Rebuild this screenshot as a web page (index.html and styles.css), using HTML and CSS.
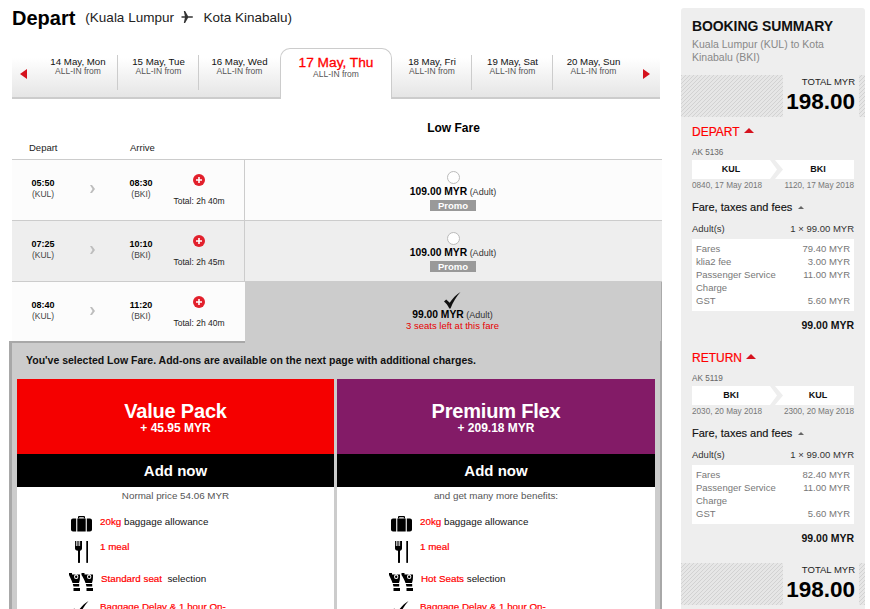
FILE: index.html
```html
<!DOCTYPE html>
<html lang="en">
<head>
<meta charset="utf-8">
<title>Depart</title>
<link rel="stylesheet" href="styles.css">
</head>
<body>
<svg class="defs" width="0" height="0" aria-hidden="true">
  <symbol id="i-bag" viewBox="0 0 21 16"><path d="M7 2.500V1.200C7 .6 7.500 0 8.200 0h4.600c.7 0 1.200.6 1.200 1.200v1.300h-1.200V1.300H8.200v1.200z"/><path d="M6.300 2.500h8.400v13H6.300zM5.200 2.500v13H2C.9 15.500 0 14.600 0 13.500v-9C0 3.400.9 2.500 2 2.500zM15.800 2.500H19c1.100 0 2 .9 2 2v9c0 1.100-.9 2-2 2h-3.200z"/></symbol>
  <symbol id="i-meal" viewBox="0 0 15 22"><path d="M1 0h.9v5h.8V0h.9v5h.8V0h.9v5h.8V0H8v7.500c0 1.200-.9 2-2 2.300V21.500c0 .3-.3.500-.7.500H4.600c-.4 0-.6-.2-.6-.5V9.800C2 9.500 1 8.700 1 7.500z"/><path d="M12.300 0H14v21.500c0 .3-.3.500-.7.500h-.4c-.4 0-.6-.2-.6-.5z"/></symbol>
  <symbol id="i-seat" viewBox="0 0 24 18"><path fill-rule="evenodd" d="M0 0h3v1.500h8V4c0 2-.3 4-1 6H3.500C2.500 7 1 4 0 2zM5 3.800a2.200 2.200 0 1 0 4.400 0 2.200 2.200 0 1 0-4.400 0zM6 3.800a1.200 1.200 0 1 1 2.400 0 1.200 1.200 0 1 1-2.400 0z"/><path d="M3.800 11h6.400v2.500H4.500zM4.500 15H11v3H4.500z"/><path fill-rule="evenodd" d="M12.500 0h3v1.500H24V4c0 2-.3 4-1 6h-6.500c-1-3-2.500-6-4-8zM18 3.800a2.200 2.200 0 1 0 4.400 0 2.200 2.200 0 1 0-4.400 0zM19 3.800a1.200 1.200 0 1 1 2.400 0 1.200 1.200 0 1 1-2.400 0z"/><path d="M16.800 11h6.400v2.500h-5.700zM17.500 15H24v3h-6.500z"/></symbol>
  <symbol id="i-check" viewBox="0 0 17 17"><path d="M0 9.500l2.200-2 3.500 3.300C8.500 6.500 12 2.700 16.500 0 12.500 4.500 9 10 6.500 16.500H5.300C4 13.500 2.200 11.300 0 9.500z"/></symbol>
  <symbol id="i-plus" viewBox="0 0 12 12"><circle cx="6" cy="6" r="6" fill="#e2202c"/><path d="M5.200 3h1.600v2.200H9v1.600H6.800V9H5.200V6.800H3V5.200h2.200z" fill="#fff"/></symbol>
  <symbol id="i-chev" viewBox="0 0 5 8"><path d="M0 0h2L5 4 2 8H0l2.500-4z" fill="#bdbdbd"/></symbol>
</svg>

<div class="page">
  <main class="main">
    <header class="title">
      <h1>Depart</h1>
      <span class="route">(Kuala Lumpur
        <svg class="plane" viewBox="0 0 12 12" width="12" height="12"><path d="M0 5.200h3.900L2.800 0h1.300l3 5.200H11c.6 0 1 .4 1 .8s-.4.800-1 .8H7.100l-3 5.200H2.800l1.100-5.200H0l1-.8z" fill="#333"/></svg>
        <span>Kota Kinabalu)</span></span>
    </header>

    <nav class="dates">
      <div class="date-arrow"><span class="tri tri-left"></span></div>
      <div class="date"><b>14 May, Mon</b><small>ALL-IN from</small></div>
      <div class="date"><b>15 May, Tue</b><small>ALL-IN from</small></div>
      <div class="date date-last"><b>16 May, Wed</b><small>ALL-IN from</small></div>
      <div class="date-active"><b>17 May, Thu</b><small>ALL-IN from</small></div>
      <div class="date"><b>18 May, Fri</b><small>ALL-IN from</small></div>
      <div class="date"><b>19 May, Sat</b><small>ALL-IN from</small></div>
      <div class="date date-last"><b>20 May, Sun</b><small>ALL-IN from</small></div>
      <div class="date-arrow"><span class="tri tri-right"></span></div>
    </nav>

    <div class="table-head">
      <div class="head-left"><span class="h-dep">Depart</span><span class="h-arr">Arrive</span></div>
      <div class="head-fare">Low Fare</div>
    </div>

    <div class="row">
      <div class="flight">
        <div class="time"><b>05:50</b><span>(KUL)</span></div>
        <svg class="chev"><use href="#i-chev"/></svg>
        <div class="time"><b>08:30</b><span>(BKI)</span></div>
        <div class="total"><svg class="plus"><use href="#i-plus"/></svg><span>Total: 2h 40m</span></div>
      </div>
      <div class="fare">
        <span class="radio"></span>
        <div class="price"><b>109.00 MYR</b> <span>(Adult)</span></div>
        <div class="promo">Promo</div>
      </div>
    </div>
    <div class="row row-alt">
      <div class="flight">
        <div class="time"><b>07:25</b><span>(KUL)</span></div>
        <svg class="chev"><use href="#i-chev"/></svg>
        <div class="time"><b>10:10</b><span>(BKI)</span></div>
        <div class="total"><svg class="plus"><use href="#i-plus"/></svg><span>Total: 2h 45m</span></div>
      </div>
      <div class="fare">
        <span class="radio"></span>
        <div class="price"><b>109.00 MYR</b> <span>(Adult)</span></div>
        <div class="promo">Promo</div>
      </div>
    </div>
    <div class="row row-selected">
      <div class="flight">
        <div class="time"><b>08:40</b><span>(KUL)</span></div>
        <svg class="chev"><use href="#i-chev"/></svg>
        <div class="time"><b>11:20</b><span>(BKI)</span></div>
        <div class="total"><svg class="plus"><use href="#i-plus"/></svg><span>Total: 2h 40m</span></div>
      </div>
      <div class="fare">
        <svg class="tick"><use href="#i-check"/></svg>
        <div class="price"><b>99.00 MYR</b> <span>(Adult)</span></div>
        <div class="seats">3 seats left at this fare</div>
      </div>
    </div>

    <section class="addons">
      <p class="addons-note">You've selected Low Fare. Add-ons are available on the next page with additional charges.</p>
      <div class="packs">
        <article class="pack">
          <div class="pack-head pack-red"><h2>Value Pack</h2><b>+ 45.95 MYR</b></div>
          <div class="pack-add">Add now</div>
          <p class="pack-sub">Normal price 54.06 MYR</p>
          <ul class="perks">
            <li class="perk-a"><svg class="ic-bag"><use href="#i-bag"/></svg><span><em>20kg</em> baggage allowance</span></li>
            <li class="perk-b"><svg class="ic-meal"><use href="#i-meal"/></svg><span><em>1 meal</em></span></li>
            <li class="perk-c"><svg class="ic-seat"><use href="#i-seat"/></svg><span><em>Standard seat</em>&nbsp; selection</span></li>
            <li class="perk-d"><svg class="ic-check"><use href="#i-check"/></svg><span><em>Baggage Delay &amp; 1 hour On-</em></span></li>
          </ul>
        </article>
        <article class="pack">
          <div class="pack-head pack-purple"><h2>Premium Flex</h2><b>+ 209.18 MYR</b></div>
          <div class="pack-add">Add now</div>
          <p class="pack-sub">and get many more benefits:</p>
          <ul class="perks">
            <li class="perk-a"><svg class="ic-bag"><use href="#i-bag"/></svg><span><em>20kg</em> baggage allowance</span></li>
            <li class="perk-b"><svg class="ic-meal"><use href="#i-meal"/></svg><span><em>1 meal</em></span></li>
            <li class="perk-c"><svg class="ic-seat"><use href="#i-seat"/></svg><span><em>Hot Seats</em> selection</span></li>
            <li class="perk-d"><svg class="ic-check"><use href="#i-check"/></svg><span><em>Baggage Delay &amp; 1 hour On-</em></span></li>
          </ul>
        </article>
      </div>
    </section>
  </main>

  <aside class="summary">
    <h2 class="sum-title">BOOKING SUMMARY</h2>
    <p class="sum-route">Kuala Lumpur (KUL) to Kota Kinabalu (BKI)</p>
    <div class="sum-total"><div class="sum-total-box"><span>TOTAL MYR</span><b>198.00</b></div></div>

    <h3 class="leg">DEPART <span class="leg-tri"></span></h3>
    <div class="flight-no">AK 5136</div>
    <div class="ports"><b>KUL</b><span class="ports-sep"></span><b>BKI</b></div>
    <div class="port-times"><span>0840, 17 May 2018</span><span>1120, 17 May 2018</span></div>
    <div class="fees-title">Fare, taxes and fees <span class="fees-tri"></span></div>
    <div class="adults"><span>Adult(s)</span><span>1 × 99.00 MYR</span></div>
    <dl class="lines">
      <div><dt>Fares</dt><dd>79.40 MYR</dd></div>
      <div><dt>klia2 fee</dt><dd>3.00 MYR</dd></div>
      <div><dt>Passenger Service Charge</dt><dd>11.00 MYR</dd></div>
      <div><dt>GST</dt><dd>5.60 MYR</dd></div>
    </dl>
    <div class="leg-sum">99.00 MYR</div>

    <h3 class="leg leg-return">RETURN <span class="leg-tri"></span></h3>
    <div class="flight-no">AK 5119</div>
    <div class="ports"><b>BKI</b><span class="ports-sep"></span><b>KUL</b></div>
    <div class="port-times"><span>2030, 20 May 2018</span><span>2300, 20 May 2018</span></div>
    <div class="fees-title">Fare, taxes and fees <span class="fees-tri"></span></div>
    <div class="adults"><span>Adult(s)</span><span>1 × 99.00 MYR</span></div>
    <dl class="lines">
      <div><dt>Fares</dt><dd>82.40 MYR</dd></div>
      <div><dt>Passenger Service Charge</dt><dd>11.00 MYR</dd></div>
      <div><dt>GST</dt><dd>5.60 MYR</dd></div>
    </dl>
    <div class="leg-sum">99.00 MYR</div>

    <div class="sum-total sum-total-end"><div class="sum-total-box"><span>TOTAL MYR</span><b>198.00</b></div></div>
  </aside>
</div>
</body>
</html>
```

FILE: styles.css
```css
* { box-sizing: border-box; }
html, body { margin: 0; height: 609px; overflow: hidden; background: #fff; }
body { font-family: "Liberation Sans", Arial, sans-serif; color: #000; }
.defs { position: absolute; }
.page { display: flex; align-items: flex-start; padding-left: 12px; height: 609px; overflow: hidden; }
.main { width: 650px; flex: none; }

.title { height: 48px; display: flex; align-items: flex-start; padding-top: 6px; }
.title h1 { margin: 0; font-size: 20px; line-height: 24px; font-weight: 700; }
.route { margin-left: 10px; font-size: 13.500px; line-height: 24px; color: #222; }
.plane { margin: 0 7px 0 3px; vertical-align: -1px; }

.dates { display: grid; grid-template-columns: 26px 80px 81px 81px 112px 80px 81px 81px 26px; width: 648px; height: 51px; }
.date, .date-arrow { background: linear-gradient(#fff 0, #fff 20%, #e5e5e5 100%); border-bottom: 2px solid #ccc; }
.date { position: relative; text-align: center; padding-top: 8px; }
.date::after { content: ""; position: absolute; right: 0; top: 7px; height: 35px; width: 1px; background: #ccc; }
.date-last::after { display: none; }
.date b { display: block; font-weight: 400; font-size: 9.700px; line-height: 11px; color: #111; }
.date small { display: block; font-size: 8.500px; line-height: 9px; color: #555; }
.date-active { text-align: center; padding-top: 6px; border: 1px solid #ccc; border-bottom: 0; border-radius: 10px 10px 0 0; background: #fff; }
.date-active b { display: block; font-size: 13.700px; line-height: 15px; font-weight: 400; color: #f00; -webkit-text-stroke: .3px #f00; }
.date-active small { display: block; font-size: 8.500px; line-height: 9px; color: #555; }
.date-arrow { display: flex; align-items: center; }
.tri { display: block; width: 0; height: 0; border-style: solid; margin-top: 3px; }
.tri-left { border-width: 5px 7px 5px 0; border-color: transparent #d5121e transparent transparent; margin-left: 8px; }
.tri-right { border-width: 5px 0 5px 7px; border-color: transparent transparent transparent #d5121e; margin-left: 9px; }

.table-head { display: flex; height: 61px; border-bottom: 1px solid #ccc; }
.head-left { width: 233px; font-size: 9.500px; color: #222; display: flex; align-items: flex-end; padding: 0 0 6px 17px; }
.h-dep { width: 101px; }
.head-fare { flex: 1; text-align: center; padding-top: 22px; font-size: 12px; font-weight: 700; }

.row { display: flex; height: 61px; border-bottom: 1px solid #ccc; background: #fcfcfc; }
.row-alt { background: #eee; }
.flight { width: 233px; flex: none; display: flex; border-right: 1px solid #ccc; }
.time { width: 46px; text-align: center; padding-top: 18px; line-height: 11px; font-size: 8.500px; color: #444; }
.flight .time:first-child { margin-left: 8px; }
.time b { display: block; color: #000; font-size: 9px; font-weight: 700; }
.chev { width: 5px; height: 8px; margin: 25px 23px 0 24px; flex: none; }
.total { width: 70px; text-align: center; padding-top: 14px; font-size: 8.500px; color: #222; }
.plus { display: block; width: 12px; height: 12px; margin: 0 auto 10px; }
.total span { display: block; line-height: 10px; white-space: nowrap; }
.fare { flex: 1; text-align: center; padding: 11px 1px 0 0; }
.radio { display: block; width: 13px; height: 13px; margin: 0 auto; border-radius: 50%; background: #fff; border: 1px solid #bbb; }
.price { font-size: 9px; line-height: 11px; margin-top: 2px; color: #333; }
.price b { font-size: 10.300px; color: #000; }
.promo { width: 46px; height: 11px; margin: 2px auto 0; background: #999; color: #fff; font-size: 9.500px; line-height: 11px; font-weight: 700; }

.row-selected { height: 59px; border-bottom: 0; }
.row-selected .flight { border-right: 0; }
.row-selected .fare { background: #ccc; padding-top: 10px; border-right: 1px solid #aaa; }
.tick { display: block; width: 17px; height: 17px; margin: 0 auto; fill: #111; }
.row-selected .price { margin-top: 0; }
.seats { font-size: 9.500px; line-height: 10px; color: #e60000; }

.addons { position: relative; margin-left: -3px; width: 653px; height: 270px; background: #ccc; border: 0 solid #a8a8a8; border-width: 0 2px 0 3px; padding: 13px 5px 0 5px; }
.addons::before { content: ""; position: absolute; left: 0; top: 0; width: 233px; height: 2px; background: #a8a8a8; }
.addons-note { margin: 0 0 12px 9px; font-size: 10.500px; line-height: 13px; font-weight: 700; color: #111; white-space: nowrap; }
.packs { display: flex; gap: 3px; }
.pack { width: 318px; height: 232px; background: #fff; }
.pack:first-child { width: 317px; }
.pack-head { height: 75px; color: #fff; text-align: center; padding-top: 21px; }
.pack-red { background: #f50000; }
.pack-purple { background: #831b67; }
.pack-head h2 { margin: 0; font-size: 20px; line-height: 22px; font-weight: 700; letter-spacing: -.2px; }
.pack-head b { display: block; font-size: 12px; line-height: 13px; }
.pack-add { height: 33px; background: #000; color: #fff; text-align: center; font-weight: 700; font-size: 15px; line-height: 33px; }
.pack-sub { margin: 0; text-align: center; font-size: 9.800px; line-height: 17px; color: #555; }
.perks { list-style: none; margin: 0; padding: 0 0 0 53px; font-size: 9.800px; color: #111; }
.perks li { display: flex; }
.perks em { font-style: normal; color: #f00; -webkit-text-stroke: .2px #f00; }
.perks span { display: block; white-space: nowrap; line-height: 11px; }
.perk-a { height: 32px; padding-top: 12px; }
.ic-bag { width: 21px; height: 16px; margin: 0 8px 0 1px; }
.perk-b { height: 32px; padding-top: 5px; }
.ic-meal { width: 15px; height: 22px; margin: 0 11px 0 4px; }
.perk-c { height: 28px; padding-top: 5px; }
.ic-seat { width: 24px; height: 18px; margin: 0 8px 0 -1px; }
.perk-d { height: 20px; padding-top: 5px; }
.ic-check { width: 17px; height: 17px; margin: 0 11px 0 2px; }

.summary { width: 184px; margin-left: 19px; margin-top: 8px; flex: none; height: 601px; background: #eee; border-radius: 3px 3px 0 0; padding-top: 11px; overflow: hidden; }
.summary > * { margin-left: 11px; margin-right: 11px; }
.sum-title { margin-top: 0; margin-bottom: 0; font-size: 14px; line-height: 14px; font-weight: 700; letter-spacing: -.1px; color: #111; white-space: nowrap; }
.sum-route { margin-top: 5px; margin-bottom: 0; font-size: 10.500px; line-height: 13px; color: #888; }
.summary > .sum-total { margin: 11px 0 0; height: 42px; padding-left: 102px; background: repeating-linear-gradient(135deg, #d2d2d2 0, #d2d2d2 1px, #e6e6e6 1px, #e6e6e6 2.830px); }
.sum-total-box { width: 76px; height: 42px; background: #eee; text-align: right; padding: 1px 4px 0 0; }
.sum-total-box span { display: block; font-size: 9.500px; line-height: 11px; color: #222; }
.sum-total-box b { display: block; margin-top: 2px; font-size: 22.500px; line-height: 26px; color: #000; }
.leg { margin-top: 8px; margin-bottom: 0; font-size: 12px; line-height: 14px; font-weight: 400; color: #f00; -webkit-text-stroke: .2px #f00; }
.leg-tri { display: inline-block; width: 0; height: 0; border: 5px solid transparent; border-top: 0; border-bottom: 5px solid #d5121e; vertical-align: 3px; margin-left: 1px; }
.leg-return { margin-top: 20px; }
.flight-no { margin-top: 9px; font-size: 8.200px; line-height: 10px; color: #666; }
.ports { display: flex; height: 19px; margin-top: 2px; background: #fff; }
.ports b { width: 78px; flex: none; text-align: center; font-size: 9px; line-height: 19px; color: #111; }
.ports b:last-child { flex: 1; width: auto; }
.ports-sep { width: 12px; flex: none; position: relative; }
.ports-sep::after { content: ""; position: absolute; left: 0; top: 0; width: 13px; height: 19px; background: #eee; clip-path: polygon(0 0, 5px 0, 13px 50%, 5px 100%, 0 100%, 7px 50%); }
.port-times { display: flex; justify-content: space-between; margin-top: 1px; font-size: 8.200px; line-height: 11px; color: #777; white-space: nowrap; }
.fees-title { margin-top: 10px; font-size: 11px; line-height: 13px; color: #111; -webkit-text-stroke: .15px #111; }
.fees-tri { display: inline-block; width: 0; height: 0; margin-left: 3px; border: 3px solid transparent; border-top: 0; border-bottom: 3px solid #666; vertical-align: 2px; }
.adults { display: flex; justify-content: space-between; margin-top: 9px; font-size: 9.500px; line-height: 12px; color: #333; }
.lines { margin-top: 4px; margin-bottom: 0; background: #fff; padding: 3px 4px 4px; font-size: 9.500px; line-height: 13px; color: #777; }
.lines div { display: flex; justify-content: space-between; }
.lines dt { width: 85px; }
.lines dd { margin: 0; }
.leg-sum { margin-top: 8px; text-align: right; font-size: 10.500px; line-height: 12px; font-weight: 700; color: #111; }
.summary > .sum-total-end { margin-top: 19px; }
```
